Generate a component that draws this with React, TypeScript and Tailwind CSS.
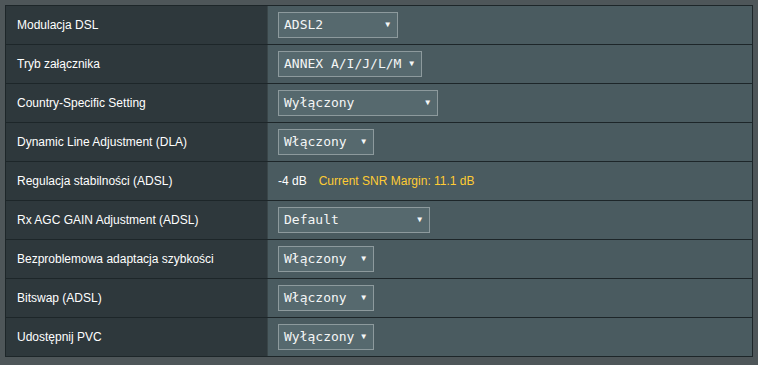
import React from "react";

type Row = { label: string; kind: "select" | "text"; value?: string; w?: number };

const rows: Row[] = [
  { label: "Modulacja DSL", kind: "select", value: "ADSL2", w: 120 },
  { label: "Tryb załącznika", kind: "select", value: "ANNEX A/I/J/L/M", w: 144 },
  { label: "Country-Specific Setting", kind: "select", value: "Wyłączony", w: 160 },
  { label: "Dynamic Line Adjustment (DLA)", kind: "select", value: "Włączony", w: 96 },
  { label: "Regulacja stabilności (ADSL)", kind: "text" },
  { label: "Rx AGC GAIN Adjustment (ADSL)", kind: "select", value: "Default", w: 152 },
  { label: "Bezproblemowa adaptacja szybkości", kind: "select", value: "Włączony", w: 96 },
  { label: "Bitswap (ADSL)", kind: "select", value: "Włączony", w: 96 },
  { label: "Udostępnij PVC", kind: "select", value: "Wyłączony", w: 96 },
];

function Select({ value, w }: { value: string; w: number }) {
  return (
    <div
      className="h-[26px] flex items-center justify-between border border-[#8d9a9d] bg-[#56696e] pl-[5px] pr-[7px] text-[#f4f6f6] text-[13px] font-['DejaVu_Sans_Mono',monospace]"
      style={{ width: w }}
    >
      <span className="whitespace-nowrap">{value}</span>
      <span className="text-[8px] leading-none">▼</span>
    </div>
  );
}

export default function App() {
  return (
    <div className="w-[758px] h-[365px] bg-[#4e5659] pt-[5px] pl-[5px] font-['Liberation_Sans',Arial,sans-serif]">
      <div className="w-[748px] border border-[#1d2629] border-b-0">
        {rows.map((r, i) => (
          <div key={i} className="flex h-[39px] border-b border-[#1d2629]">
            <div className="w-[261px] bg-[#2e383c] flex items-center pl-[11px] text-white text-[12px]">
              {r.label}
            </div>
            <div className="flex-1 bg-[#4a5b60] border-l border-[#3a4649] flex items-center pl-[10px]">
              {r.kind === "select" ? (
                <Select value={r.value!} w={r.w!} />
              ) : (
                <div className="flex items-center text-[12px] pl-[0px]">
                  <span className="text-white">-4 dB</span>
                  <span className="ml-[12px] text-[#ffcc33]">Current SNR Margin: 11.1 dB</span>
                </div>
              )}
            </div>
          </div>
        ))}
      </div>
    </div>
  );
}
